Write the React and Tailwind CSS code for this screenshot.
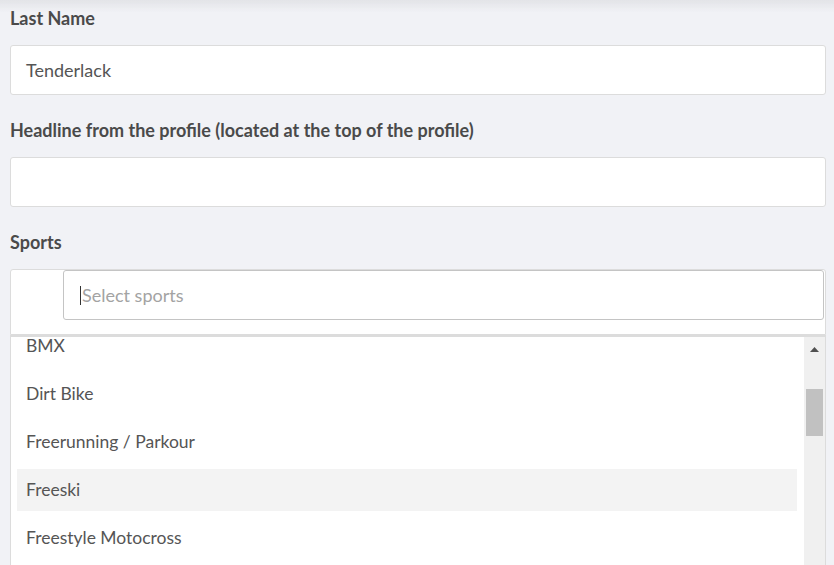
import React from "react";

const sports = ["BMX", "Dirt Bike", "Freerunning / Parkour", "Freeski", "Freestyle Motocross"];

const Field = ({ label, value }) => (
  <div className="mb-[23px]">
    <div className="h-[24px] leading-[24px] mb-[15px] text-[18px] font-bold text-[#4a4a4a]">{label}</div>
    <div className="h-[50px] bg-white border border-[#dcdcdc] rounded-[3px] px-[15px] flex items-center text-[18px] text-[#555]">
      {value}
    </div>
  </div>
);

const SportsSelect = () => (
  <div>
    <div className="h-[24px] leading-[24px] mb-[15px] text-[18px] font-bold text-[#4a4a4a]">Sports</div>
    <div className="bg-white border border-[#dcdcdc] rounded-t-[3px] pl-[52px] pr-px pb-[14px]">
      <div className="h-[50px] border border-[#c4c4c4] rounded-[3px] flex items-center pl-[16px] text-[18px]">
        <span className="w-px h-[19px] bg-[#333] mr-px" />
        <span className="text-[#a3a3a3]">Select sports</span>
      </div>
    </div>
    <div className="h-[240px] bg-white border-x border-t-2 border-[#dcdcdc] flex overflow-hidden">
      <div className="flex-1 pl-[6px] pr-[7px] overflow-hidden">
        <div className="mt-[-12px]">
          {sports.map((s) => (
            <div
              key={s}
              className={
                "h-[42px] mb-[6px] pl-[9px] flex items-center text-[17.5px] text-[#555] " +
                (s === "Freeski" ? "bg-[#f3f3f3]" : "")
              }
            >
              {s}
            </div>
          ))}
        </div>
      </div>
      <div className="w-[21px] bg-[#f0f0f0] flex flex-col items-center">
        <div className="h-[24px] flex items-center justify-center">
          <svg width="9" height="5" viewBox="0 0 9 5">
            <polygon points="4.5,0 9,5 0,5" fill="#505050" />
          </svg>
        </div>
        <div className="mt-[28px] w-[17px] h-[47px] bg-[#c1c1c1]" />
      </div>
    </div>
  </div>
);

export default function App() {
  return (
    <div
      className="min-h-screen bg-[#f1f2f6] pt-[6px] pl-[10px] pr-[8px] overflow-hidden h-[565px]"
      style={{ fontFamily: "Lato, 'Noto Sans', sans-serif" }}
    >
      <div className="fixed top-0 left-0 right-0 h-[12px] bg-gradient-to-b from-[#e2e3e7] to-transparent pointer-events-none" />
      <Field label="Last Name" value="Tenderlack" />
      <Field label="Headline from the profile (located at the top of the profile)" value="" />
      <SportsSelect />
    </div>
  );
}
